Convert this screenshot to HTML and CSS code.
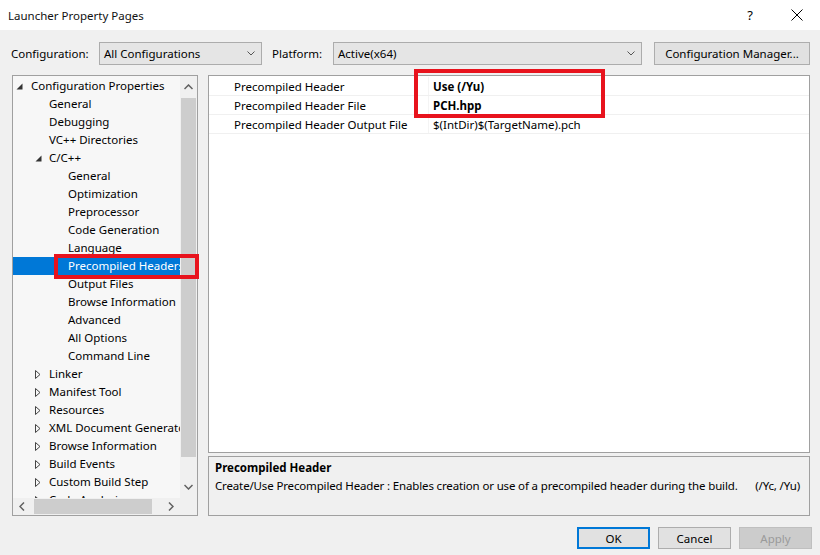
FILE: index.html
```html
<!DOCTYPE html>
<html lang="en">
<head>
  <meta charset="UTF-8" />
  <title>Launcher Property Pages</title>
  <link rel="stylesheet" href="styles.css">
</head>
<body>
  <div class="titlebar">
    <span class="title">Launcher Property Pages</span>
    <span class="help">?</span>
    <svg class="close" width="12" height="12" viewBox="0 0 12 12">
      <path d="M0.5 0.5 L11.5 11.5 M11.5 0.5 L0.5 11.5" stroke="#000" stroke-width="1" fill="none" />
    </svg>
  </div>

  <div class="main">
    <div class="toolbar">
      <label class="tb-label tb-config">Configuration:</label>
      <div class="combo combo-config">
        <span>All Configurations</span>
        <svg width="8" height="5" viewBox="0 0 8 5"><path d="M0.5 0.5 L4 4 L7.5 0.5" stroke="#555" fill="none" /></svg>
      </div>
      <label class="tb-label tb-platform">Platform:</label>
      <div class="combo combo-platform">
        <span>Active(x64)</span>
        <svg width="8" height="5" viewBox="0 0 8 5"><path d="M0.5 0.5 L4 4 L7.5 0.5" stroke="#555" fill="none" /></svg>
      </div>
      <button class="btn btn-manager">Configuration Manager...</button>
    </div>

    <div class="content">
      <!-- Arbol de propiedades -->
      <div class="tree">
        <div class="tree-view">
          <div class="node lvl1"><svg class="tri" width="7" height="7" viewBox="0 0 7 7"><polygon points="6.5,0.5 6.5,6.5 0.5,6.5" fill="#333" /></svg>Configuration Properties</div>
          <div class="node lvl2">General</div>
          <div class="node lvl2">Debugging</div>
          <div class="node lvl2">VC++ Directories</div>
          <div class="node lvl2"><svg class="tri" width="7" height="7" viewBox="0 0 7 7"><polygon points="6.5,0.5 6.5,6.5 0.5,6.5" fill="#333" /></svg>C/C++</div>
          <div class="node lvl3">General</div>
          <div class="node lvl3">Optimization</div>
          <div class="node lvl3">Preprocessor</div>
          <div class="node lvl3">Code Generation</div>
          <div class="node lvl3">Language</div>
          <div class="node lvl3 selected">Precompiled Headers</div>
          <div class="node lvl3">Output Files</div>
          <div class="node lvl3">Browse Information</div>
          <div class="node lvl3">Advanced</div>
          <div class="node lvl3">All Options</div>
          <div class="node lvl3">Command Line</div>
          <div class="node lvl2"><svg class="tri closed" width="6" height="9" viewBox="0 0 6 9"><polygon points="0.5,0.5 5,4.5 0.5,8.5" fill="none" stroke="#444" /></svg>Linker</div>
          <div class="node lvl2"><svg class="tri closed" width="6" height="9" viewBox="0 0 6 9"><polygon points="0.5,0.5 5,4.5 0.5,8.5" fill="none" stroke="#444" /></svg>Manifest Tool</div>
          <div class="node lvl2"><svg class="tri closed" width="6" height="9" viewBox="0 0 6 9"><polygon points="0.5,0.5 5,4.5 0.5,8.5" fill="none" stroke="#444" /></svg>Resources</div>
          <div class="node lvl2"><svg class="tri closed" width="6" height="9" viewBox="0 0 6 9"><polygon points="0.5,0.5 5,4.5 0.5,8.5" fill="none" stroke="#444" /></svg>XML Document Generator</div>
          <div class="node lvl2"><svg class="tri closed" width="6" height="9" viewBox="0 0 6 9"><polygon points="0.5,0.5 5,4.5 0.5,8.5" fill="none" stroke="#444" /></svg>Browse Information</div>
          <div class="node lvl2"><svg class="tri closed" width="6" height="9" viewBox="0 0 6 9"><polygon points="0.5,0.5 5,4.5 0.5,8.5" fill="none" stroke="#444" /></svg>Build Events</div>
          <div class="node lvl2"><svg class="tri closed" width="6" height="9" viewBox="0 0 6 9"><polygon points="0.5,0.5 5,4.5 0.5,8.5" fill="none" stroke="#444" /></svg>Custom Build Step</div>
          <div class="node lvl2"><svg class="tri closed" width="6" height="9" viewBox="0 0 6 9"><polygon points="0.5,0.5 5,4.5 0.5,8.5" fill="none" stroke="#444" /></svg>Code Analysis</div>
        </div>
        <div class="vscroll">
          <svg class="arrow" width="9" height="6" viewBox="0 0 9 6"><path d="M0.5 5 L4.5 1 L8.5 5" stroke="#606060" stroke-width="1.5" fill="none" /></svg>
          <div class="vthumb"></div>
          <svg class="arrow" width="9" height="6" viewBox="0 0 9 6"><path d="M0.5 1 L4.5 5 L8.5 1" stroke="#606060" stroke-width="1.5" fill="none" /></svg>
        </div>
        <div class="hscroll">
          <svg class="arrow" width="6" height="9" viewBox="0 0 6 9"><path d="M5 0.5 L1 4.5 L5 8.5" stroke="#606060" stroke-width="1.5" fill="none" /></svg>
          <div class="hthumb"></div>
          <svg class="arrow arrow-right" width="6" height="9" viewBox="0 0 6 9"><path d="M1 0.5 L5 4.5 L1 8.5" stroke="#606060" stroke-width="1.5" fill="none" /></svg>
        </div>
        <div class="corner"></div>
        <div class="mark mark-tree"></div>
      </div>

      <div class="right">
        <!-- Tabla de propiedades -->
        <div class="grid">
          <div class="row">
            <div class="name">Precompiled Header</div>
            <div class="value bold">Use (/Yu)</div>
          </div>
          <div class="row">
            <div class="name">Precompiled Header File</div>
            <div class="value bold">PCH.hpp</div>
          </div>
          <div class="row">
            <div class="name">Precompiled Header Output File</div>
            <div class="value">$(IntDir)$(TargetName).pch</div>
          </div>
          <div class="mark mark-grid"></div>
        </div>

        <div class="desc">
          <div class="desc-title">Precompiled Header</div>
          <div class="desc-text">
            <span>Create/Use Precompiled Header : Enables creation or use of a precompiled header during the build.</span>
            <span>(/Yc, /Yu)</span>
          </div>
        </div>
      </div>
    </div>

    <div class="footer">
      <button class="btn btn-ok">OK</button>
      <button class="btn">Cancel</button>
      <button class="btn btn-disabled">Apply</button>
    </div>
  </div>
</body>
</html>
```

FILE: styles.css
```css
body {
  margin: 0;
  font-family: "Noto Sans", "Open Sans", sans-serif;
  font-size: 11.5px;
  color: #000;
  background-color: #f0f0f0;
  width: 820px;
  height: 555px;
  overflow: hidden;
}

.titlebar {
  height: 30px;
  background-color: #fff;
  display: flex;
  align-items: center;
  padding-left: 8px;
}

.title {
  flex: 1;
  color: #111;
}

.help {
  font-size: 13px;
  margin-right: 38px;
}

.close {
  margin-right: 17px;
}

.main {
  padding: 12px 10px 0 11px;
}

.toolbar {
  display: flex;
  align-items: center;
  height: 23px;
}

.tb-config {
  width: 88px;
}

.tb-platform {
  width: 61px;
  margin-left: 10px;
}

.combo {
  box-sizing: border-box;
  height: 23px;
  border: 1px solid #acacac;
  background-color: #e5e5e5;
  display: flex;
  align-items: center;
  justify-content: space-between;
  padding: 0 6px 0 4px;
}

.combo-config {
  width: 163px;
}

.combo-platform {
  width: 309px;
}

.btn {
  box-sizing: border-box;
  height: 22px;
  width: 73px;
  border: 1px solid #adadad;
  background-color: #e1e1e1;
  font-family: inherit;
  font-size: 11.5px;
  color: #000;
  padding: 0;
}

.btn-manager {
  height: 23px;
  width: 156px;
  margin-left: auto;
}

.content {
  display: flex;
  margin-top: 10px;
  height: 441px;
  gap: 10px;
}

.tree {
  position: relative;
  box-sizing: border-box;
  width: 186px;
  margin-left: 1px;
  border: 1px solid #a0a0a0;
  display: grid;
  grid-template-columns: minmax(0, 1fr) 17px;
  grid-template-rows: minmax(0, 1fr) 17px;
  background-color: #f7f7f7;
}

.tree-view {
  overflow: hidden;
  min-height: 0;
  padding-top: 1px;
}

.node {
  height: 18px;
  line-height: 18px;
  white-space: nowrap;
  position: relative;
}

.tri {
  position: absolute;
  top: 6px;
}

.tri.closed {
  top: 5px;
}

.lvl1 {
  padding-left: 18px;
}

.lvl1 .tri {
  left: 3px;
}

.lvl2 {
  padding-left: 36px;
}

.lvl2 .tri {
  left: 22px;
}

.lvl3 {
  padding-left: 55px;
}

.selected {
  background-color: #0078d7;
  color: #fff;
}

.vscroll {
  background-color: #f0f0f0;
  display: flex;
  flex-direction: column;
  align-items: center;
  min-height: 0;
}

.vscroll .arrow {
  margin: 8px 0;
  flex-shrink: 0;
}

.vthumb {
  flex: 1;
  width: 15px;
  background-color: #cdcdcd;
  margin-bottom: 19px;
}

.hscroll {
  background-color: #f0f0f0;
  display: flex;
  align-items: center;
}

.hscroll .arrow {
  margin: 0 6px;
}

.hscroll .arrow-right {
  margin-left: auto;
  margin-right: 6px;
}

.hthumb {
  height: 15px;
  width: 118px;
  background-color: #cdcdcd;
  margin-left: 3px;
}

.corner {
  background-color: #f0f0f0;
}

.mark {
  position: absolute;
  border: 4px solid #e8131d;
  box-sizing: border-box;
  pointer-events: none;
}

.mark-tree {
  left: 41px;
  top: 178px;
  width: 145px;
  height: 25px;
}

.right {
  flex: 1;
  display: flex;
  flex-direction: column;
  gap: 3px;
}

.grid {
  position: relative;
  flex: 1;
  background-color: #fff;
  border: 1px solid #a0a0a0;
  padding-top: 1px;
}

.row {
  display: flex;
  height: 18px;
  line-height: 19px;
  border-bottom: 1px solid #f0f0f0;
  white-space: nowrap;
}

.name {
  width: 194px;
  padding-left: 25px;
  border-right: 1px solid #f4f4f4;
}

.value {
  padding-left: 4px;
}

.bold {
  font-weight: bold;
}

.mark-grid {
  left: 205px;
  top: -7px;
  width: 191px;
  height: 49px;
}

.desc {
  box-sizing: border-box;
  height: 60px;
  border: 1px solid #a0a0a0;
  padding: 2px 9px 0 6px;
}

.desc-title {
  font-weight: bold;
  line-height: 18px;
}

.desc-text {
  display: flex;
  justify-content: space-between;
  line-height: 18px;
  white-space: nowrap;
  letter-spacing: -0.15px;
}

.footer {
  display: flex;
  justify-content: flex-end;
  gap: 8px;
  margin-top: 11px;
  margin-right: -2px;
}

.btn-ok {
  border: 2px solid #0078d7;
}

.btn-disabled {
  background-color: #cccccc;
  border-color: #bfbfbf;
  color: #9a9a9a;
}
```
